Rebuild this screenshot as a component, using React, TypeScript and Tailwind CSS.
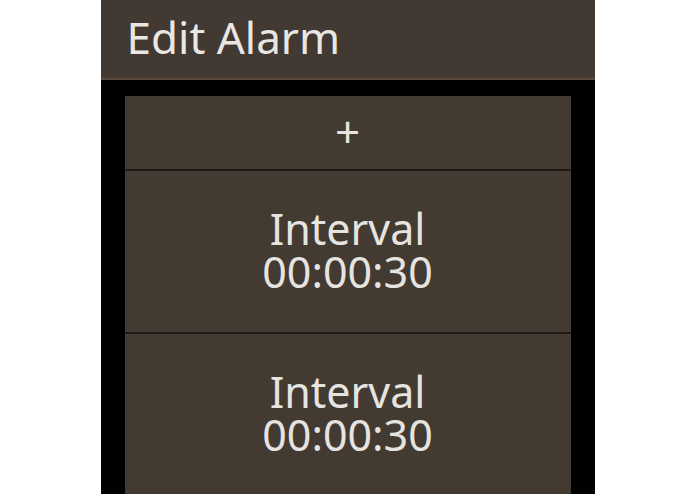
const rows = [
  { label: "Interval", time: "00:00:30" },
  { label: "Interval", time: "00:00:30" },
];

export default function App() {
  return (
    <div className="flex h-[494px] w-full justify-center overflow-hidden bg-white">
      <div
        className="flex w-[494px] flex-col bg-black"
        style={{ fontFamily: '"Noto Sans", "Open Sans", sans-serif' }}
      >
        <header className="flex h-[80px] shrink-0 items-center border-b-2 border-[#5a4a3b] bg-[#423a32] pl-[26px] pb-[4px]">
          <h1 className="text-[44px] leading-none text-[#e9e7e4]">Edit Alarm</h1>
        </header>
        <div className="mx-[24px] mt-[16px] flex flex-col bg-[#433a31] text-[#e6e4e1]">
          <button className="flex h-[75px] items-center justify-center border-b-2 border-[#1d1915] pb-[4px] text-[44px] leading-none">
            +
          </button>
          {rows.map((r, i) => (
            <div
              key={i}
              className="flex h-[163px] shrink-0 flex-col items-center justify-center border-b-2 border-[#1d1915] pb-[4px] text-[43px] leading-[43px]"
            >
              <span>{r.label}</span>
              <span>{r.time}</span>
            </div>
          ))}
        </div>
      </div>
    </div>
  );
}
